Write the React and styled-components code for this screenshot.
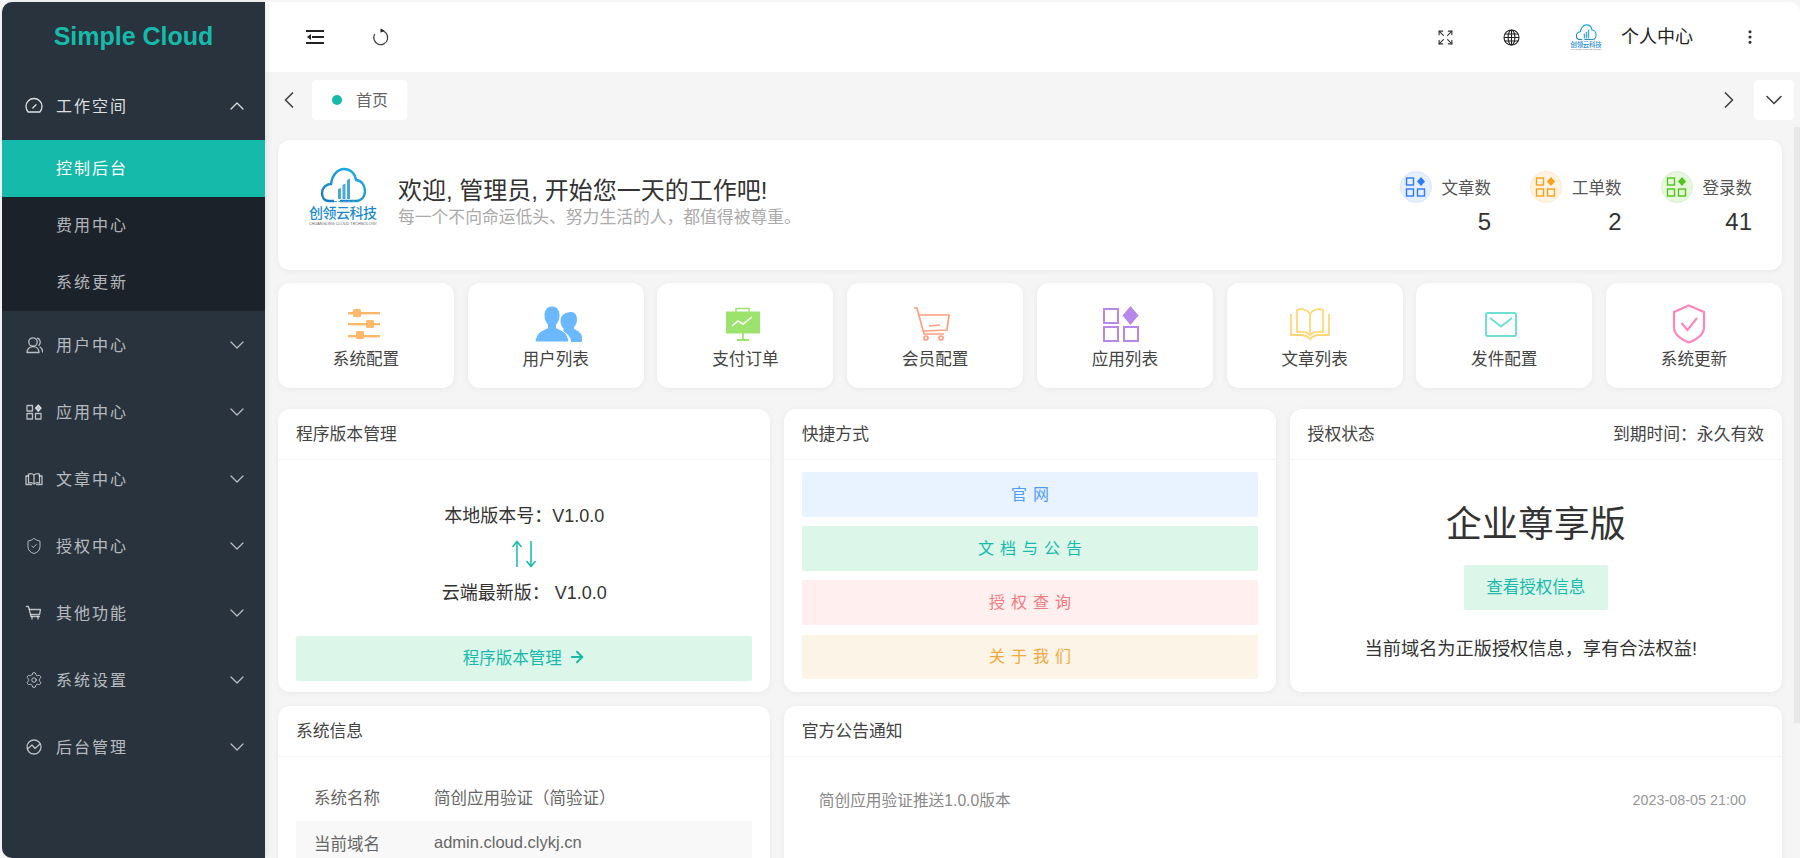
import React from "react";
import styled, { createGlobalStyle } from "styled-components";
import { ChevronDown, ChevronUp, ChevronLeft, ChevronRight, Expand, EllipsisVertical, ShieldCheck, Settings, ArrowRight } from "lucide-react";

const COLON = "\uFF1A";
const COMMA = "\uFF0C";
const PAREN_L = "\uFF08";
const PAREN_R = "\uFF09";

const Global = createGlobalStyle`
  html, body { margin: 0; height: 100%; background: #f5f5f5; }
  #root { height: 100%; }
  * { box-sizing: border-box; }
  body { font-family: "Liberation Sans", "Noto Sans CJK SC", sans-serif; color: #333; }
`;

const Shell = styled.div`
  display: flex; height: 858px; padding: 2px 0 0 2px; overflow: hidden;
`;
const Sidebar = styled.aside`
  width: 263px; flex: none; background: #28333e; color: rgba(255,255,255,.72);
  border-radius: 10px 0 0 10px; box-shadow: 2px 0 6px rgba(0,0,0,.08); z-index: 1;
  display: flex; flex-direction: column;
`;
const Brand = styled.div`
  height: 71px; flex: none; padding-top: 17px; line-height: 34px; text-align: center;
  font-size: 25px; font-weight: 700; color: #16baaa;
`;
const MenuItem = styled.div`
  height: 67px; flex: none; display: flex; align-items: center; gap: 13px;
  padding: 0 16px ${p => (p.$open ? "2px" : "0")} 23px; font-size: 16px; letter-spacing: 2px;
  color: ${p => (p.$open ? "rgba(255,255,255,.85)" : "rgba(255,255,255,.68)")};
  svg { flex: none; }
`;
const MenuLabel = styled.span`
  padding-bottom: 2px;
`;
const Chevron = styled.span`
  margin-left: auto; display: flex;
`;
const SubMenu = styled.div`
  background: #1c222a;
`;
const SubItem = styled.div`
  height: 57px; display: flex; align-items: center; padding: 0 0 3px 54px;
  font-size: 16px; letter-spacing: 2px;
  background: ${p => (p.$active ? "#16baaa" : "transparent")};
  color: ${p => (p.$active ? "#fff" : "rgba(255,255,255,.68)")};
`;
const Main = styled.main`
  flex: 1; min-width: 0; display: flex; flex-direction: column;
`;
const TopBar = styled.header`
  height: 70px; flex: none; background: #fff; border-radius: 0 10px 0 0;
  display: flex; align-items: center; padding: 0 17px;
`;
const IconButton = styled.button`
  width: 66px; height: 40px; flex: none; border: 0; background: none; padding: 0; color: #333;
  display: flex; align-items: center; justify-content: center;
`;
const TopRight = styled.div`
  margin-left: auto; display: flex; align-items: center;
`;
const Profile = styled.div`
  display: flex; align-items: center; gap: 19px; margin: 0 24px 0 26px;
  font-size: 18px; color: #222;
`;
const ProfileName = styled.span`
  padding-bottom: 4px;
`;
const TabRow = styled.div`
  height: 55px; flex: none; display: flex; align-items: flex-start; padding: 8px 6px 0 0;
`;
const TabNav = styled.button`
  width: ${p => p.$w}px; height: 40px; flex: none; border: 0; background: none; padding: 0; color: #444;
  display: flex; align-items: center; justify-content: center;
  margin-left: ${p => (p.$end ? "auto" : "0")};
`;
const Tab = styled.div`
  height: 40px; display: flex; align-items: center; gap: 14px; padding: 0 19px 2px 20px;
  background: #fff; border-radius: 4px; font-size: 16px; color: #666;
`;
const Dot = styled.i`
  width: 10px; height: 10px; border-radius: 50%; background: #16baaa; margin-top: 2px;
`;
const TabMenu = styled.button`
  width: 40px; height: 40px; flex: none; border: 0; padding: 0; background: #fff; border-radius: 4px; color: #444;
  display: flex; align-items: center; justify-content: center;
`;
const Content = styled.div`
  position: relative; flex: 1; min-height: 0; overflow: hidden; padding: 13px 18px 0 13px;
  display: flex; flex-direction: column;
`;
const ScrollThumb = styled.div`
  position: absolute; top: 0; right: 0; width: 6px; height: 596px; background: #e8e8e8;
`;
const Card = styled.section`
  background: #fff; border-radius: 12px; box-shadow: 0 1px 6px rgba(0,0,0,.055);
  display: flex; flex-direction: column; min-width: 0;
`;
const Welcome = styled(Card)`
  flex-direction: row; align-items: center; height: 130px; flex: none; padding: 0 30px;
`;
const LogoBox = styled.div`
  margin-bottom: 18px; margin-right: 20px; display: flex;
`;
const Greeting = styled.div`
  padding-bottom: 8px;
`;
const Hello = styled.div`
  font-size: 24px; line-height: 34px; color: #333;
`;
const Motto = styled.div`
  font-size: 16.8px; line-height: 20px; color: #aaa;
`;
const Stats = styled.div`
  margin-left: auto; display: flex; gap: 39px;
`;
const StatHead = styled.div`
  display: flex; align-items: center; gap: 10px; font-size: 16.5px; color: #555;
`;
const StatCircle = styled.span`
  width: 32px; height: 32px; border-radius: 50%; display: flex; align-items: center; justify-content: center;
  background: ${p => p.$bg}; border: 1px solid ${p => p.$line};
`;
const StatValue = styled.div`
  text-align: right; font-size: 24px; line-height: 34px; margin-top: 2px; color: #333;
`;
const QuickGrid = styled.div`
  display: grid; grid-template-columns: repeat(8, 1fr); column-gap: 13.7px; margin: 13px 0 21px; flex: none;
`;
const QuickCard = styled(Card)`
  height: 105px; align-items: center; padding-top: 20px;
`;
const QuickIcon = styled.div`
  height: 42px; display: flex; align-items: center; justify-content: center;
  margin-left: ${p => p.$shift * 2}px;
`;
const QuickLabel = styled.div`
  font-size: 16.6px; line-height: 24px; margin-top: 3px; color: #444;
`;
const PanelGrid = styled.div`
  display: grid; grid-template-columns: repeat(3, 1fr); column-gap: 13.4px; row-gap: 14px; flex: none;
`;
const Panel = styled(Card)`
  height: ${p => p.$h}px; grid-column: span ${p => p.$span || 1};
`;
const PanelHead = styled.div`
  height: 51px; flex: none; display: flex; align-items: center; justify-content: space-between;
  padding: 0 18px 3px; border-bottom: 1px solid #f5f5f5; font-size: 16.8px; color: #444;
`;
const VersionBody = styled.div`
  flex: 1; display: flex; flex-direction: column; padding: 41px 18px 12px; text-align: center;
`;
const VersionLine = styled.div`
  font-size: 18px; line-height: 30px; color: #333;
`;
const Swap = styled.div`
  height: 47px; display: flex; align-items: center; justify-content: center; padding-bottom: 2px;
`;
const Action = styled.div`
  height: 44.5px; flex: none; display: flex; align-items: center; justify-content: center; gap: 6px;
  border-radius: 2px; font-size: ${p => (p.$spaced ? "16px" : "16.5px")};
  letter-spacing: ${p => (p.$spaced ? "6px" : "0")}; padding: 0 0 3px ${p => (p.$spaced ? "6px" : "0")};
  background: ${p => p.$bg}; color: ${p => p.$fg};
  margin-top: ${p => p.$top || 0}px;
`;
const LinksBody = styled.div`
  flex: 1; display: flex; flex-direction: column; gap: 9.7px; padding: 12px 18px 12px;
`;
const LicenseBody = styled.div`
  flex: 1; display: flex; flex-direction: column; align-items: center; padding-top: 40px;
`;
const Edition = styled.div`
  font-size: 36px; line-height: 50px; color: #333;
`;
const LicenseButton = styled(Action)`
  width: 144px; height: 45px; margin-top: 15px;
`;
const LicenseNote = styled.div`
  font-size: 18.2px; line-height: 30px; margin-top: 24px; padding-right: 10px; color: #333;
`;
const InfoBody = styled.div`
  padding: 18px 18px 0;
`;
const InfoRow = styled.div`
  height: 46px; display: flex; align-items: center; padding: 0 0 3px 18px; font-size: 16.5px; color: #666;
  background: ${p => (p.$striped ? "#f8f8f8" : "transparent")};
`;
const InfoLabel = styled.span`
  width: 120px; flex: none;
`;
const NoticeBody = styled.div`
  padding: 21px 36px 0 35px;
`;
const NoticeRow = styled.div`
  height: 46px; display: flex; align-items: center; justify-content: space-between; padding-bottom: 3px;
  font-size: 15.7px; color: #888;
`;
const NoticeDate = styled.span`
  font-size: 14.4px; color: #999;
`;

function Logo({ width = 70, small }) {
  const gid = small ? "cs" : "cl";
  return (
    <svg width={width} viewBox="8 5 70 62">
      <defs>
        <linearGradient id={gid} x1="0" y1="1" x2="1" y2="0">
          <stop offset="0" stopColor="#1878c0" />
          <stop offset="1" stopColor="#22b4e4" />
        </linearGradient>
      </defs>
      <path d="M34 41H29C24 41 22 37 22 33C22 28 26 24 31 24C32 15 38 9 44 9C50 9 55 13 56 20C61 20 65 25 65 31C65 37 61 41 56 41H40"
        fill="none" stroke={`url(#${gid})`} strokeWidth="2.4" />
      <path d="M38 39V29l3-1v11zM42.5 39V25l3-1.5V39zM47 39V20l3-1.5V39z" fill="#4ba7d6" />
      <path d="M34 41.5H56" stroke="#4ba7d6" strokeWidth="1" strokeDasharray="3 1.5" />
      <text x="9" y="58" fontSize="14" fontWeight="500" fill="#1c8ad2" textLength="68" fontFamily="'Noto Sans CJK SC', sans-serif">创领云科技</text>
      <text x="9" y="64.500" fontSize="3.600" fill="#555" textLength="68" fontFamily="'Liberation Sans', sans-serif">CHUANGLING CLOUD TECHNOLOGY</text>
    </svg>
  );
}

const Stroke = ({ children, size = 18, vb = "0 0 18 18", width = 1.3 }) => (
  <svg width={size} height={size} viewBox={vb} fill="none" stroke="currentColor" strokeWidth={width} strokeLinecap="round" strokeLinejoin="round">{children}</svg>
);
const GaugeIcon = () => <Stroke><path d="M3.200 15h11.600a8 8 0 1 0-11.600 0z" /><path d="M7.800 11 11 7.700" /></Stroke>;
const UserIcon = () => <Stroke><circle cx="8" cy="6" r="4.200" /><path d="M2 16.500c0-3.600 2.600-5.800 6-5.800s6 2.200 6 5.800z" /><path d="M12.500 2.200a4.200 4.200 0 0 1 1.400 7M15 11c1.800.9 2.600 2.800 2.600 5" /></Stroke>;
const AppsIcon = () => <Stroke><rect x="2" y="2.500" width="5.500" height="5.500" /><rect x="2" y="10.500" width="5.500" height="5.500" /><rect x="10.500" y="10.500" width="5.500" height="5.500" /><path d="m13.300 2 2.900 3.100-2.900 3.100-2.900-3.100z" fill="currentColor" /></Stroke>;
const BookIcon = () => <Stroke><path d="M9 5C7.500 3.500 5 3.500 3.500 4.200V13c1.600-.6 4-.4 5.500 1 1.500-1.400 3.900-1.600 5.500-1V4.200C13 3.500 10.500 3.500 9 5zM9 5v9" /><path d="M3.500 6H1v8.500h5.500M14.500 6H17v8.500h-5.500" /></Stroke>;
const CartIcon = () => <Stroke><path d="M1.500 2.500h2l2.500 10h8.500" /><path d="M4.500 5.500h11l-1 5H6" /><path d="M7 12.500v2.500M13 12.500v2.500" /></Stroke>;
const ChartIcon = () => <Stroke><circle cx="9" cy="9" r="7" /><path d="M3 10.500 7 7l3 3.500 5-4.500" /></Stroke>;

const MenuList = [
  [UserIcon, "用户中心"], [AppsIcon, "应用中心"], [BookIcon, "文章中心"],
  [() => <ShieldCheck size={18} strokeWidth={1.3} />, "授权中心"], [CartIcon, "其他功能"],
  [() => <Settings size={18} strokeWidth={1.3} />, "系统设置"], [ChartIcon, "后台管理"],
];

const FoldIcon = () => (
  <svg width="18" height="14" viewBox="0 0 18 14">
    <path d="M0 1h18M6 7h12M0 13h18" stroke="#222" strokeWidth="2" />
    <path d="M1 7l4-3v6z" fill="#222" />
  </svg>
);
const RefreshIcon = () => (
  <svg width="18" height="18" viewBox="0 0 18 18" fill="none">
    <path d="M9.500 2.600A7 7 0 1 1 2.700 6" stroke="#444" strokeWidth="1.300" />
    <path d="M8.500 .4l4 2.200-4 2.200z" fill="#222" />
  </svg>
);
const GlobeIcon = () => (
  <svg width="17" height="17" viewBox="0 0 17 17" fill="none" stroke="#222" strokeWidth="1.100">
    <circle cx="8.500" cy="8.500" r="7.500" />
    <ellipse cx="8.500" cy="8.500" rx="3.400" ry="7.500" />
    <path d="M8.500 1v15M1 8.500h15M2 5h13M2 12h13" />
  </svg>
);

const MiniApps = ({ color }) => (
  <svg width="22" height="22" viewBox="0 0 22 22" fill="none" stroke={color} strokeWidth="1.400">
    <rect x="1.500" y="2" width="7" height="7" /><rect x="1.500" y="13" width="7" height="7" /><rect x="12.500" y="13" width="7" height="7" />
    <path d="M16 1l4 4.500-4 4.500-4-4.500z" fill={color} stroke="none" />
  </svg>
);

const SlidersIcon = () => (
  <svg width="32" height="30" viewBox="0 0 32 30" fill="#fdb86b">
    <rect x="0" y="3" width="32" height="2.400" /><rect x="0" y="14" width="32" height="2.400" /><rect x="0" y="26" width="32" height="2.400" />
    <rect x="5" y="0" width="8" height="8" rx="1.500" /><rect x="18" y="11" width="8" height="8" rx="1.500" /><rect x="8" y="22" width="8" height="8" rx="1.500" />
  </svg>
);
const PeopleIcon = () => (
  <svg width="47" height="36" viewBox="0 0 47 36" fill="#6cb8ff">
    <path d="M36 6c4 0 6 3.500 6 7.500 0 3-1 5.500-3 7.500v2c3 1.500 7 3 8 8v5H36c0-5-3-8-7.500-10v-3.500c-2-2-3-4.500-3-8 .2-5 4.500-8.500 10.500-8.500z" />
    <path d="M17 0c5 0 8 4 8 9.500 0 4-1.500 7-3.500 9v3.500C26 24 33 26 34 36H0c1-10 8-12 12.500-14v-3.500C10.500 16.500 9 13.500 9 9.500 9 4 12 0 17 0z" stroke="#fff" strokeWidth="1" />
  </svg>
);
const BoardIcon = () => (
  <svg width="36" height="34" viewBox="0 0 36 34" fill="none">
    <path d="M11 5V1.500h13V5" stroke="#9ce36e" strokeWidth="1.500" />
    <rect x="1" y="4.500" width="34" height="22" fill="#9ce36e" />
    <path d="M7 19l6-5 5 3 9-7" stroke="#fff" strokeWidth="1.500" />
    <path d="M18 26v6M12 33h12" stroke="#9ce36e" strokeWidth="1.800" />
  </svg>
);
const BigCart = () => (
  <svg width="36" height="34" viewBox="0 0 36 34" fill="none" stroke="#ff9f7f" strokeWidth="1.700">
    <path d="M0 1h3l7 26h20" /><path d="M5 8h30l-2 15-23 1" /><path d="M15 19l11-1" /><circle cx="12" cy="31" r="2" /><circle cx="27" cy="31" r="2" />
  </svg>
);
const BigApps = () => (
  <svg width="36" height="36" viewBox="0 0 36 36" fill="none" stroke="#b688ea" strokeWidth="2">
    <rect x="1" y="3" width="14" height="14" /><rect x="1" y="21" width="14" height="14" /><rect x="21" y="21" width="14" height="14" />
    <path d="M27.500 0l8 9.500-8 9.500-8-9.500z" fill="#b688ea" stroke="none" />
  </svg>
);
const BigBook = () => (
  <svg width="40" height="32" viewBox="0 0 40 32" fill="none" stroke="#ffd774" strokeWidth="1.800">
    <path d="M20 6C18 2 12 0 7 2v22c5-1 10 0 13 3 3-3 8-4 13-3V2C28 0 22 2 20 6zM20 6v21" />
    <path d="M1 6v21h10c4 0 7 2 9 4 2-2 5-4 9-4h10V6" />
  </svg>
);
const BigMail = () => (
  <svg width="32" height="25" viewBox="0 0 32 25" fill="none" stroke="#70e0d5" strokeWidth="2">
    <rect x="1" y="1" width="30" height="23" rx="1.500" /><path d="M5 6l11 8.500L27 6" />
  </svg>
);
const BigShield = () => (
  <svg width="34" height="40" viewBox="0 0 34 40" fill="none" stroke="#ff86bd" strokeWidth="2.200">
    <path d="M17 1.500 32 8v15c0 7-6 12-15 15.500C8 35 2 30 2 23V8z" /><path d="M9.500 19l6 7L25 14" />
  </svg>
);

const Quick = [
  [SlidersIcon, "系统配置", -2], [PeopleIcon, "用户列表", 3], [BoardIcon, "支付订单", -2], [BigCart, "会员配置", -3.5],
  [BigApps, "应用列表", -3.5], [BigBook, "文章列表", -4.5], [BigMail, "发件配置", -3.5], [BigShield, "系统更新", -4.5],
];

const SwapArrows = () => (
  <svg width="28" height="28" viewBox="0 0 28 28" fill="none" stroke="#16baaa" strokeWidth="1.500">
    <path d="M7 27V2" /><path d="M2.500 7 7 1.500 11.500 7" /><path d="M21 1v25" /><path d="M16.500 21 21 26.500 25.500 21" />
  </svg>
);

const GREEN = { $bg: "#dcf6ea", $fg: "#16baaa" };

export default function App() {
  return (
    <>
      <Global />
      <Shell>
        <Sidebar>
          <Brand>Simple Cloud</Brand>
          <MenuItem $open><GaugeIcon /><MenuLabel>工作空间</MenuLabel><Chevron><ChevronUp size={24} strokeWidth={1.3} /></Chevron></MenuItem>
          <SubMenu>
            <SubItem $active>控制后台</SubItem>
            <SubItem>费用中心</SubItem>
            <SubItem>系统更新</SubItem>
          </SubMenu>
          {MenuList.map(([Icon, label]) => (
            <MenuItem key={label}><Icon /><MenuLabel>{label}</MenuLabel><Chevron><ChevronDown size={24} strokeWidth={1.3} /></Chevron></MenuItem>
          ))}
        </Sidebar>
        <Main>
          <TopBar>
            <IconButton><FoldIcon /></IconButton>
            <IconButton><RefreshIcon /></IconButton>
            <TopRight>
              <IconButton><Expand size={17} strokeWidth={1.6} /></IconButton>
              <IconButton><GlobeIcon /></IconButton>
              <Profile><Logo width={32} small /><ProfileName>个人中心</ProfileName></Profile>
              <IconButton><EllipsisVertical size={18} strokeWidth={2.2} /></IconButton>
            </TopRight>
          </TopBar>
          <TabRow>
            <TabNav $w={47}><ChevronLeft size={28} strokeWidth={1.5} /></TabNav>
            <Tab><Dot />首页</Tab>
            <TabNav $w={50} $end><ChevronRight size={28} strokeWidth={1.5} /></TabNav>
            <TabMenu><ChevronDown size={28} strokeWidth={1.4} /></TabMenu>
          </TabRow>
          <Content>
            <ScrollThumb />
            <Welcome>
              <LogoBox><Logo /></LogoBox>
              <Greeting>
                <Hello>欢迎, 管理员, 开始您一天的工作吧!</Hello>
                <Motto>{`每一个不向命运低头、努力生活的人${COMMA}都值得被尊重。`}</Motto>
              </Greeting>
              <Stats>
                <div>
                  <StatHead><StatCircle $bg="#e6effe" $line="#d8e6fd"><MiniApps color="#2d7bf5" /></StatCircle>文章数</StatHead>
                  <StatValue>5</StatValue>
                </div>
                <div>
                  <StatHead><StatCircle $bg="#fff3e2" $line="#fdebd2"><MiniApps color="#fa9f1a" /></StatCircle>工单数</StatHead>
                  <StatValue>2</StatValue>
                </div>
                <div>
                  <StatHead><StatCircle $bg="#e7f7de" $line="#dcf2d0"><MiniApps color="#52c41a" /></StatCircle>登录数</StatHead>
                  <StatValue>41</StatValue>
                </div>
              </Stats>
            </Welcome>
            <QuickGrid>
              {Quick.map(([Icon, label, shift]) => (
                <QuickCard key={label}>
                  <QuickIcon $shift={shift}><Icon /></QuickIcon>
                  <QuickLabel>{label}</QuickLabel>
                </QuickCard>
              ))}
            </QuickGrid>
            <PanelGrid>
              <Panel $h={283}>
                <PanelHead>程序版本管理</PanelHead>
                <VersionBody>
                  <VersionLine>{`本地版本号${COLON}V1.0.0`}</VersionLine>
                  <Swap><SwapArrows /></Swap>
                  <VersionLine>{`云端最新版${COLON} V1.0.0`}</VersionLine>
                  <Action {...GREEN} $top={28}>程序版本管理<ArrowRight size={18} strokeWidth={2.5} /></Action>
                </VersionBody>
              </Panel>
              <Panel $h={283}>
                <PanelHead>快捷方式</PanelHead>
                <LinksBody>
                  <Action $spaced $bg="#e8f3ff" $fg="#4f9bff">官网</Action>
                  <Action $spaced {...GREEN}>文档与公告</Action>
                  <Action $spaced $bg="#ffefef" $fg="#f57a80">授权查询</Action>
                  <Action $spaced $bg="#fdf4e8" $fg="#f2a93c">关于我们</Action>
                </LinksBody>
              </Panel>
              <Panel $h={283}>
                <PanelHead>授权状态<span>{`到期时间${COLON}永久有效`}</span></PanelHead>
                <LicenseBody>
                  <Edition>企业尊享版</Edition>
                  <LicenseButton {...GREEN}>查看授权信息</LicenseButton>
                  <LicenseNote>{`当前域名为正版授权信息${COMMA}享有合法权益!`}</LicenseNote>
                </LicenseBody>
              </Panel>
              <Panel $h={304}>
                <PanelHead>系统信息</PanelHead>
                <InfoBody>
                  <InfoRow><InfoLabel>系统名称</InfoLabel>{`简创应用验证${PAREN_L}简验证${PAREN_R}`}</InfoRow>
                  <InfoRow $striped><InfoLabel>当前域名</InfoLabel>admin.cloud.clykj.cn</InfoRow>
                </InfoBody>
              </Panel>
              <Panel $h={304} $span={2}>
                <PanelHead>官方公告通知</PanelHead>
                <NoticeBody>
                  <NoticeRow>简创应用验证推送1.0.0版本<NoticeDate>2023-08-05 21:00</NoticeDate></NoticeRow>
                </NoticeBody>
              </Panel>
            </PanelGrid>
          </Content>
        </Main>
      </Shell>
    </>
  );
}
